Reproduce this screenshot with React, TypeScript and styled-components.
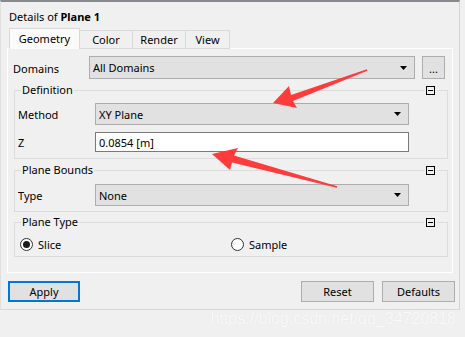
import React, { useState } from "react";
import styled, { createGlobalStyle } from "styled-components";

const GlobalStyle = createGlobalStyle`
  * { box-sizing: border-box; }
  body {
    margin: 0;
    background: #f0f0f0;
    font-family: "Noto Sans", "Liberation Sans", sans-serif;
    font-size: 11px;
    color: #000;
  }
`;

const Page = styled.div`
  position: relative;
  width: 465px;
  height: 337px;
  overflow: hidden;
`;

const Frame = styled.div`
  width: 460px;
  height: 310px;
  border-top: 2px solid #878b8f;
  border-right: 1px solid #d4d4d4;
  border-bottom: 1px solid #d8d8d8;
  border-left: 1px solid #e0e0e0;
`;

const Title = styled.div`
  padding: 7px 0 0 8px;
  line-height: 16px;
  height: 23px;
  b { font-weight: 700; }
`;

const TabStrip = styled.div`
  display: flex;
  align-items: flex-end;
  height: 21px;
  margin-top: 3px;
  padding-left: 8px;
`;

const Tab = styled.div<{ $active?: boolean; $w: number }>`
  width: ${(p) => p.$w}px;
  height: ${(p) => (p.$active ? 21 : 19)}px;
  display: flex;
  align-items: center;
  justify-content: center;
  border: 1px solid #d9d9d9;
  border-bottom: ${(p) => (p.$active ? "none" : "1px solid #d9d9d9")};
  border-left: ${(p) => (p.$active ? "1px solid #d9d9d9" : "none")};
  background: ${(p) => (p.$active ? "#fbfbfb" : "#f0f0f0")};
  position: ${(p) => (p.$active ? "relative" : "static")};
  z-index: ${(p) => (p.$active ? 1 : 0)};
  padding-bottom: ${(p) => (p.$active ? 2 : 1)}px;
`;

const Panel = styled.div`
  margin: -1px 0 0 6px;
  width: 446px;
  height: 225px;
  border: 1px solid #ffffff;
  padding-top: 7px;
`;

const FieldRow = styled.div<{ $pad: number; $top?: number }>`
  display: flex;
  align-items: center;
  padding-left: ${(p) => p.$pad}px;
  margin-top: ${(p) => p.$top ?? 0}px;
`;

const Label = styled.div<{ $w: number }>`
  width: ${(p) => p.$w}px;
  flex-shrink: 0;
  padding-top: 1px;
`;

const Combo = styled.div<{ $w: number; $h: number }>`
  width: ${(p) => p.$w}px;
  height: ${(p) => p.$h}px;
  background: #e1e1e1;
  border: 1px solid #adadad;
  display: flex;
  align-items: center;
  justify-content: space-between;
  padding: 0 7px 0 3px;
`;

const TextBox = styled.div`
  width: 314px;
  height: 20px;
  background: #fff;
  border: 1px solid #7a7a7a;
  display: flex;
  align-items: center;
  padding-left: 3px;
`;

const DotsButton = styled.div`
  width: 23px;
  height: 23px;
  margin-left: 7px;
  background: #e1e1e1;
  border: 1px solid #adadad;
  display: flex;
  align-items: flex-end;
  justify-content: center;
  padding-bottom: 4px;
  line-height: 10px;
`;

const Group = styled.div<{ $top: number; $bottom: number }>`
  margin: ${(p) => p.$top}px 0 0 6px;
  width: 434px;
  border: 1px solid #dcdcdc;
  padding-bottom: ${(p) => p.$bottom}px;
`;

const GroupHeader = styled.div`
  display: flex;
  align-items: center;
  justify-content: space-between;
  height: 14px;
  margin-top: -8px;
  padding: 0 12px 0 6px;
`;

const GroupTitle = styled.span`
  background: #f0f0f0;
  padding: 0 1px;
  line-height: 14px;
`;

const Collapse = styled.div`
  width: 9px;
  height: 9px;
  border: 1px solid #000;
  background: #f0f0f0;
  box-shadow: 0 0 0 2px #f0f0f0;
  display: flex;
  align-items: center;
  justify-content: center;
  &::after {
    content: "";
    width: 5px;
    height: 1px;
    background: #000;
  }
`;

const RadioGrid = styled.div`
  display: grid;
  grid-template-columns: 211px auto;
  padding-left: 5px;
  margin-top: 9px;
`;

const RadioItem = styled.label`
  display: flex;
  align-items: center;
  gap: 5px;
  height: 13px;
  cursor: default;
`;

const RadioCircle = styled.span<{ $on: boolean }>`
  width: 13px;
  height: 13px;
  border-radius: 50%;
  border: 1px solid #333;
  background: #fff;
  display: flex;
  align-items: center;
  justify-content: center;
  &::after {
    content: "";
    width: 7px;
    height: 7px;
    border-radius: 50%;
    background: ${(p) => (p.$on ? "#1a1a1a" : "transparent")};
  }
`;

const ButtonBar = styled.div`
  display: flex;
  margin-top: 8px;
  padding: 0 4px 0 7px;
`;

const Button = styled.div<{ $primary?: boolean }>`
  width: ${(p) => (p.$primary ? 72 : 73)}px;
  height: 21px;
  background: #e1e1e1;
  border: ${(p) => (p.$primary ? "2px solid #0078d7" : "1px solid #adadad")};
  display: flex;
  align-items: center;
  justify-content: center;
  margin-left: ${(p) => (p.$primary ? 0 : 8)}px;
  &:nth-child(2) { margin-left: auto; }
`;

const Watermark = styled.div`
  text-align: right;
  padding-right: 9px;
  font-family: "Liberation Sans", Arial, sans-serif;
  font-size: 16px;
  line-height: 18px;
  color: #f9f9f9;
  text-shadow: 0 0 1px rgba(0, 0, 0, 0.07);
`;

const Arrows = styled.svg`
  position: absolute;
  left: 0;
  top: 0;
  pointer-events: none;
`;

const Caret = () => (
  <svg width="7" height="4" viewBox="0 0 7 4">
    <polygon points="0,0 7,0 3.5,4" fill="#000" />
  </svg>
);

const App: React.FC = () => {
  const [planeType, setPlaneType] = useState("slice");

  return (
    <Page>
      <GlobalStyle />
      <Frame>
        <Title>
          Details of <b>Plane 1</b>
        </Title>
        <TabStrip>
          <Tab $active $w={71}>Geometry</Tab>
          <Tab $w={53}>Color</Tab>
          <Tab $w={53}>Render</Tab>
          <Tab $w={44}>View</Tab>
        </TabStrip>
        <Panel>
          <FieldRow $pad={5}>
            <Label $w={76}>Domains</Label>
            <Combo $w={326} $h={23}>
              <span>All Domains</span>
              <Caret />
            </Combo>
            <DotsButton>...</DotsButton>
          </FieldRow>

          <Group $top={11} $bottom={6}>
            <GroupHeader>
              <GroupTitle>Definition</GroupTitle>
              <Collapse />
            </GroupHeader>
            <FieldRow $pad={3} $top={6}>
              <Label $w={77}>Method</Label>
              <Combo $w={314} $h={22}>
                <span>XY Plane</span>
                <Caret />
              </Combo>
            </FieldRow>
            <FieldRow $pad={3} $top={7}>
              <Label $w={77}>Z</Label>
              <TextBox>0.0854 [m]</TextBox>
            </FieldRow>
          </Group>

          <Group $top={11} $bottom={5}>
            <GroupHeader>
              <GroupTitle>Plane Bounds</GroupTitle>
              <Collapse />
            </GroupHeader>
            <FieldRow $pad={3} $top={7}>
              <Label $w={77}>Type</Label>
              <Combo $w={314} $h={22}>
                <span>None</span>
                <Caret />
              </Combo>
            </FieldRow>
          </Group>

          <Group $top={10} $bottom={5}>
            <GroupHeader>
              <GroupTitle>Plane Type</GroupTitle>
              <Collapse />
            </GroupHeader>
            <RadioGrid>
              <RadioItem onClick={() => setPlaneType("slice")}>
                <RadioCircle $on={planeType === "slice"} />
                Slice
              </RadioItem>
              <RadioItem onClick={() => setPlaneType("sample")}>
                <RadioCircle $on={planeType === "sample"} />
                Sample
              </RadioItem>
            </RadioGrid>
          </Group>
        </Panel>
        <ButtonBar>
          <Button $primary>Apply</Button>
          <Button>Reset</Button>
          <Button>Defaults</Button>
        </ButtonBar>
      </Frame>
      <Watermark>https://blog.csdn.net/qq_34720818</Watermark>

      <Arrows width="465" height="337" viewBox="0 0 465 337">
        <polygon
          points="273,103 289,86 291,95 366.8,69.3 367.4,70.7 293,101 297,108"
          fill="#ff3b3b"
        />
        <polygon
          points="212,154 238,148 234,155.6 337.2,186.3 336.8,187.7 232,162.4 230,170"
          fill="#ff3b3b"
        />
      </Arrows>
    </Page>
  );
};

export default App;
